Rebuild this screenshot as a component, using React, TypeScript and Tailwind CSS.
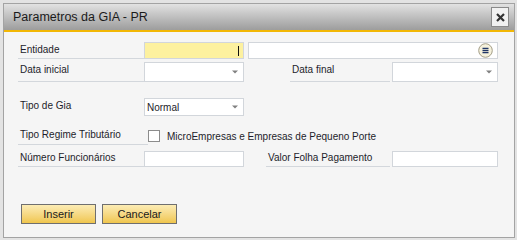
import React from 'react';

const Label = ({ text, w, line = true }: { text: string; w: string; line?: boolean }) => (
  <div className={`${w} h-full pl-[2px] pt-[2px] text-[10px] leading-[12px] text-[#1d1d2b] ${line ? 'border-b border-[#d3d7dc]' : ''}`}>
    {text}
  </div>
);

const Arrow = () => (
  <svg width="6" height="4" viewBox="0 0 6 4" className="mr-[5px]">
    <path d="M0 0.5 H6 L3 3.5 Z" fill="#808080" />
  </svg>
);

const Dropdown = ({ w, value }: { w: string; value?: string }) => (
  <div className={`${w} flex h-full items-center justify-between border border-[#d2d6db] bg-white pl-[2px]`}>
    <span className="pt-[1px] text-[10px] text-[#1d1d2b]">{value}</span>
    <Arrow />
  </div>
);

const Field = ({ w }: { w: string }) => <div className={`${w} h-full border border-[#d2d6db] bg-white`} />;

function App() {
  return (
    <div className="h-[240px] w-[517px] bg-[#e3e3e3] pb-[2px] pl-[3px] pr-[2px] pt-[3px] font-['Liberation_Sans',Arial,sans-serif]">
      <div className="flex h-full flex-col border border-[#a3a3a3] bg-[#f5f5f5]">
        {/* title bar */}
        <div className="flex h-[26px] items-center justify-between bg-gradient-to-b from-[#e2e2e2] to-[#9d9d9d] pl-[9px] pr-[5px]">
          <span className="pt-[1px] text-[12.5px] text-[#1b1b1b]">Parametros da GIA - PR</span>
          <div className="flex h-[20px] w-[18px] items-center justify-center border border-[#8a8a8a] bg-[#f1f1f1]">
            <svg width="9" height="9" viewBox="0 0 9 9">
              <path d="M1 1 L8 8 M8 1 L1 8" stroke="#333" strokeWidth="2.2" />
            </svg>
          </div>
        </div>
        <div className="h-[2px] bg-[#f2b705]" />

        <div className="flex flex-1 flex-col pl-[14px] pt-[10px]">
          {/* Entidade */}
          <div className="flex h-[17px]">
            <Label text="Entidade" w="w-[126px]" />
            <div className="flex w-[100px] items-center justify-end border border-[#d2d6db] bg-[#fdf19f] pr-[4px]">
              <span className="h-[10px] w-[1px] bg-[#111]" />
            </div>
            <div className="ml-[4px] flex w-[250px] items-center justify-end border border-[#d2d6db] bg-white pr-[4px]">
              <svg width="15" height="15" viewBox="0 0 15 15">
                <circle cx="7.5" cy="7.5" r="6.8" fill="#f5f1dc" stroke="#a39d87" />
                <path d="M4.5 5.3 H10.5 M4.5 7.5 H10.5 M4.5 9.7 H10.5" stroke="#1f3565" strokeWidth="1.3" />
              </svg>
            </div>
          </div>

          {/* Datas */}
          <div className="mt-[3px] flex h-[20px]">
            <Label text="Data inicial" w="w-[126px]" />
            <Dropdown w="w-[100px]" />
            <div className="ml-[46px] flex h-full">
              <Label text="Data final" w="w-[100px]" />
              <div className="ml-[2px] h-full">
                <Dropdown w="w-[106px]" />
              </div>
            </div>
          </div>

          {/* Tipo de Gia */}
          <div className="mt-[16px] flex h-[18px]">
            <Label text="Tipo de Gia" w="w-[126px]" line={false} />
            <Dropdown w="w-[100px]" value="Normal" />
          </div>

          {/* Regime */}
          <div className="mt-[10px] flex h-[19px] items-center">
            <div className="h-full w-[130px] border-b border-[#d3d7dc] pl-[2px] pt-[3px] text-[10px] leading-[12px] text-[#1d1d2b]">
              Tipo Regime Tributário
            </div>
            <div className="h-[12px] w-[12px] border border-[#8c8c8c] bg-white" />
            <span className="ml-[7px] pt-[1px] text-[10px] text-[#1d1d2b]">MicroEmpresas e Empresas de Pequeno Porte</span>
          </div>

          {/* Funcionarios / Folha */}
          <div className="mt-[6px] flex h-[16px]">
            <div className="h-full w-[126px] border-b border-[#d3d7dc] pl-[2px] pt-[1px] text-[10px] leading-[12px] text-[#1d1d2b]">
              Número Funcionários
            </div>
            <Field w="w-[100px]" />
            <div className="ml-[22px] h-full w-[124px] border-b border-[#d3d7dc] pl-[2px] pt-[1px] text-[10px] leading-[12px] text-[#1d1d2b]">
              Valor Folha Pagamento
            </div>
            <div className="ml-[2px] h-full">
              <Field w="w-[106px]" />
            </div>
          </div>

          {/* Buttons */}
          <div className="ml-[3px] mt-[37px] flex gap-[6px]">
            <button className="h-[20px] w-[75px] border border-[#6f6f6f] bg-gradient-to-b from-[#fcecb4] to-[#f0c64c] text-[11px] text-[#1a1a1a]">
              Inserir
            </button>
            <button className="h-[20px] w-[75px] border border-[#6f6f6f] bg-gradient-to-b from-[#fcecb4] to-[#f0c64c] text-[11px] text-[#1a1a1a]">
              Cancelar
            </button>
          </div>
        </div>
      </div>
    </div>
  );
}

export default App;
